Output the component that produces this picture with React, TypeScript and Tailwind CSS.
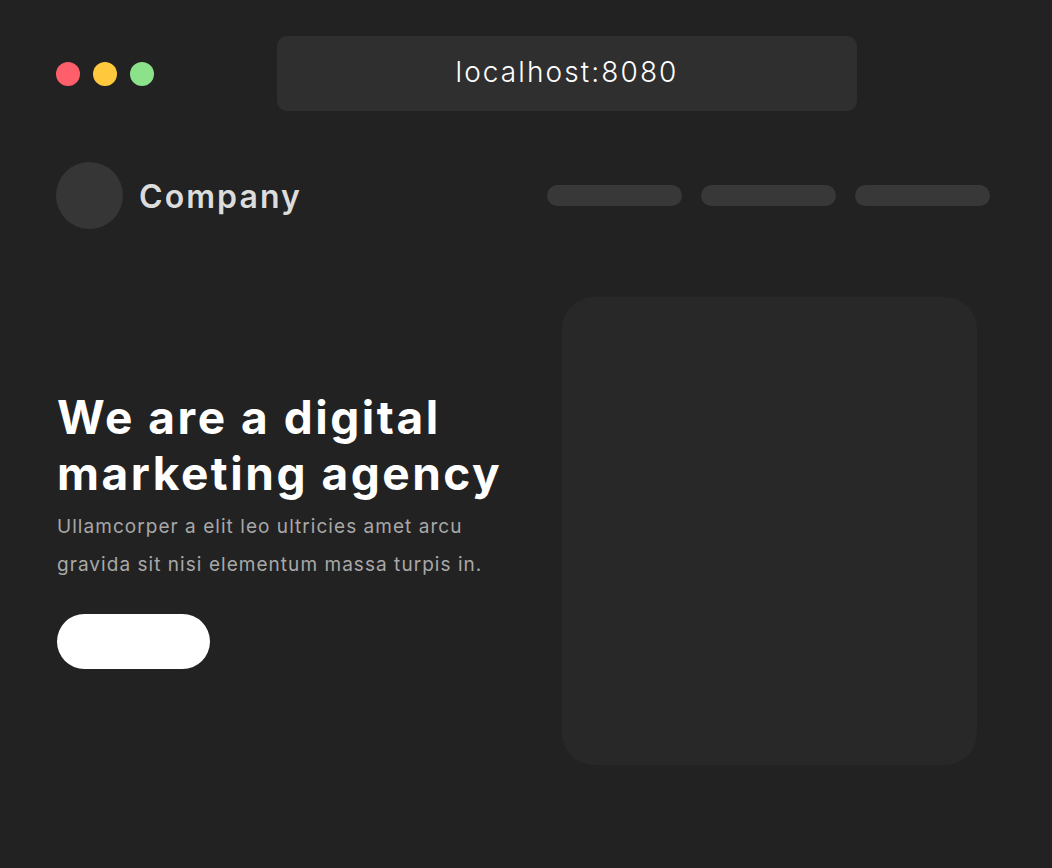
export default function App() {
  const font = { fontFamily: "Inter, 'Liberation Sans', sans-serif" };
  return (
    <div className="min-h-[868px] w-full bg-[#222222]" style={font}>
      <div className="flex items-center pl-[56px] pt-[36px]">
        <div className="flex w-[221px] items-center gap-[13px]">
          <span className="h-[24px] w-[24px] rounded-full bg-[#ff5f6a]" />
          <span className="h-[24px] w-[24px] rounded-full bg-[#ffc83d]" />
          <span className="h-[24px] w-[24px] rounded-full bg-[#8be28b]" />
        </div>
        <div className="flex h-[75px] w-[580px] items-center justify-center rounded-[10px] bg-[#2f2f2f] pb-[4px] text-[28px] font-light tracking-[0.075em] text-white">
          localhost:8080
        </div>
      </div>

      <div className="mt-[51px] flex items-center justify-between pl-[56px] pr-[62px]">
        <div className="flex items-center gap-[16px]">
          <div className="h-[67px] w-[67px] rounded-full bg-[#363636]" />
          <span className="pt-[2px] text-[32px] font-semibold tracking-[0.065em] text-[#dcdcdc]">Company</span>
        </div>
        <nav className="flex gap-[19px]">
          <span className="h-[21px] w-[135px] rounded-full bg-[#383838]" />
          <span className="h-[21px] w-[135px] rounded-full bg-[#383838]" />
          <span className="h-[21px] w-[135px] rounded-full bg-[#383838]" />
        </nav>
      </div>

      <div className="mt-[68px] flex">
        <div className="flex w-[562px] flex-col justify-center pb-[4px] pl-[57px]">
          <h1 className="text-[46px] font-bold leading-[56px] tracking-[0.055em] text-white">
            We are a digital
            <br />
            marketing agency
          </h1>
          <p className="mt-[7px] text-[19px] leading-[38px] tracking-[0.055em] text-[#a8a8a8]">
            Ullamcorper a elit leo ultricies amet arcu
            <br />
            gravida sit nisi elementum massa turpis in.
          </p>
          <button className="mt-[30px] h-[55px] w-[153px] rounded-full bg-white" />
        </div>
        <div className="h-[468px] w-[415px] rounded-[32px] bg-[#282828]" />
      </div>
    </div>
  );
}
